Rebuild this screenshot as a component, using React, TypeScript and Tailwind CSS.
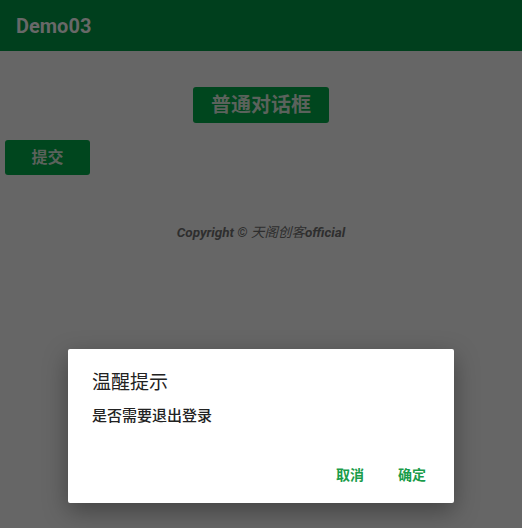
const App = () => {
  return (
    <div
      className="relative flex h-[528px] w-[522px] flex-col overflow-hidden bg-[#666666]"
      style={{ fontFamily: "Roboto, 'Noto Sans CJK SC', sans-serif" }}
    >
      {/* App Bar */}
      <div className="flex h-[51px] items-center bg-[#003f1d] px-4">
        <h1 className="text-[20px] font-bold text-[#686868]">Demo03</h1>
      </div>

      {/* Content */}
      <div className="flex flex-col">
        <div className="mt-[36px] flex justify-center">
          <button className="flex h-[36px] w-[136px] items-center justify-center rounded-[3px] bg-[#00461e] text-[20px] font-bold text-[#5b625c]">
            普通对话框
          </button>
        </div>

        <div className="mt-[17px] pl-[5px]">
          <button className="flex h-[35px] w-[85px] items-center justify-center rounded-[3px] bg-[#00461e] text-[16px] font-bold text-[#5b625c]">
            提交
          </button>
        </div>

        <p className="mt-[47px] text-center text-[13.5px] font-bold italic text-[#2e2e2e]">
          Copyright © <span className="font-normal">天阁创客</span>official
        </p>
      </div>

      {/* Dialog */}
      <div className="absolute left-[68px] top-[349px] h-[154px] w-[386px] rounded-[2px] bg-white px-6 shadow-[0_8px_24px_rgba(0,0,0,0.35)]">
        <h2 className="mt-[21px] text-[19px] leading-[26px] text-[#222222]">温醒提示</h2>
        <p className="mt-[10px] text-[15px] font-medium leading-[20px] text-[#222222]">
          是否需要退出登录
        </p>
        <div className="mt-[39px] flex justify-end gap-[34px] pr-[4px]">
          <button className="text-[14px] font-bold text-[#1a9c4a]">取消</button>
          <button className="text-[14px] font-bold text-[#1a9c4a]">确定</button>
        </div>
      </div>
    </div>
  );
};

export default App;
